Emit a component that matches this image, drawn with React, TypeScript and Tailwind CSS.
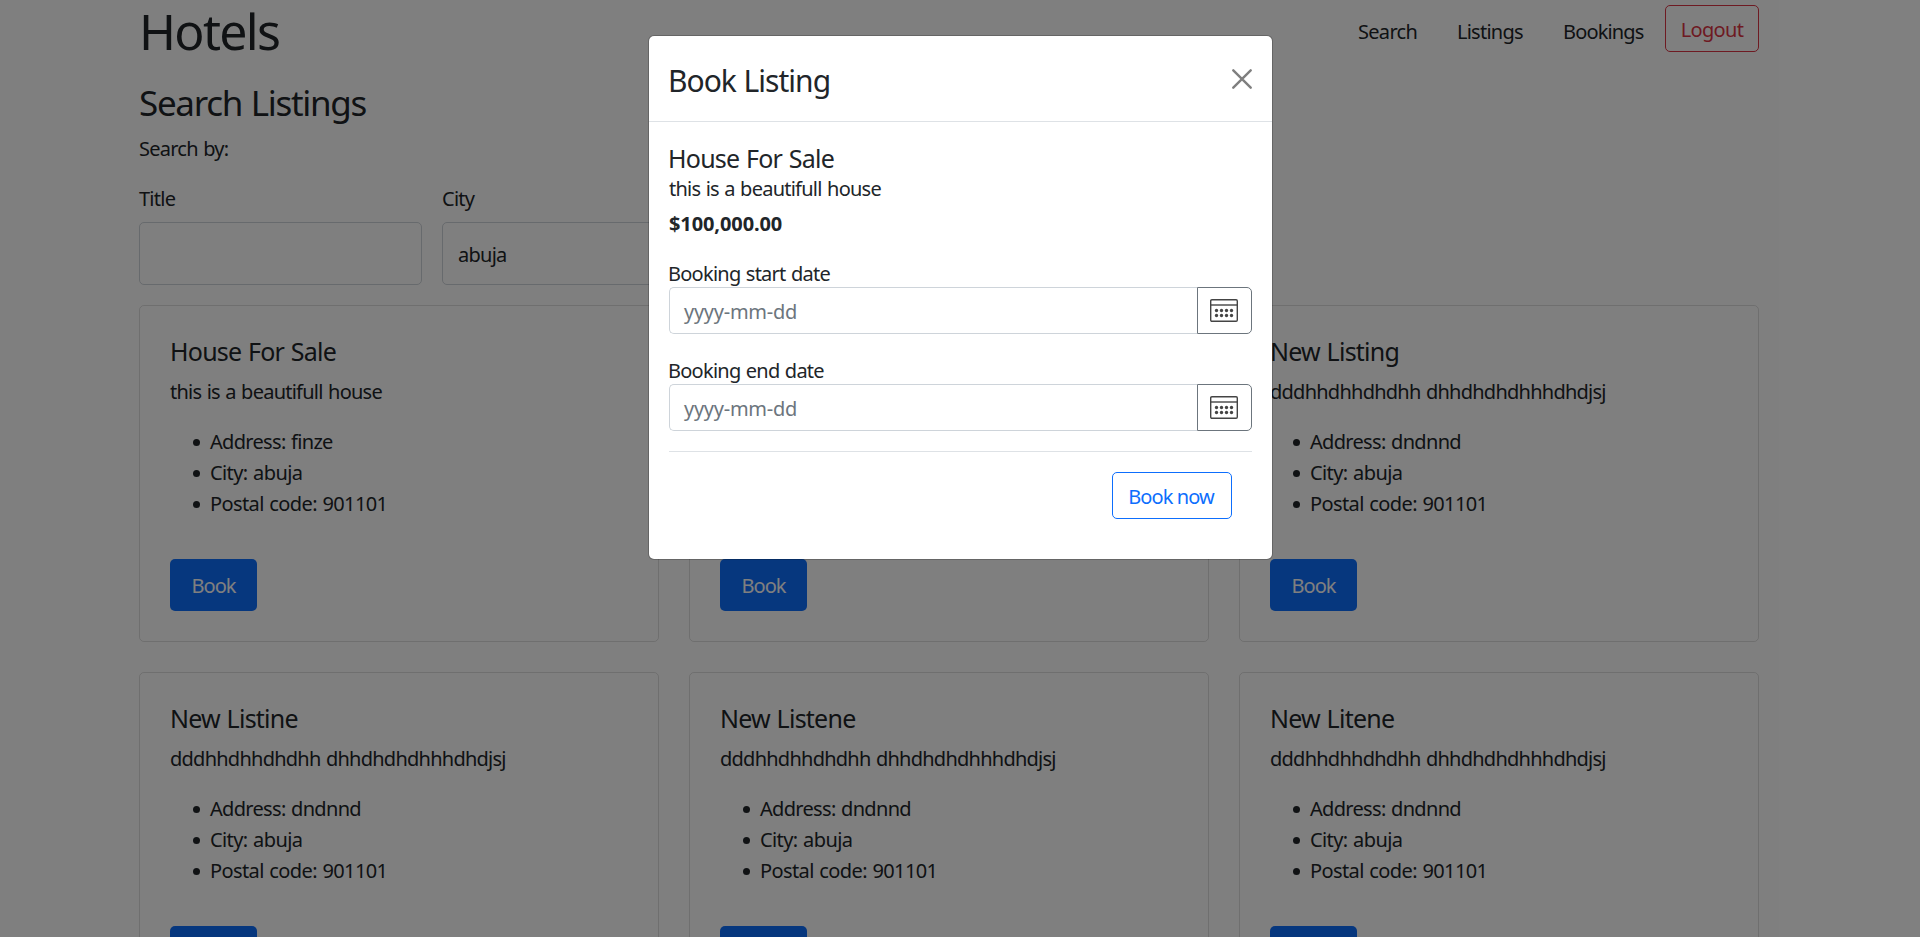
import type { ReactNode } from 'react';

type Listing = { title: string; description: string; address: string };

const gibberish = 'dddhhdhhdhdhh dhhdhdhdhhhdhdjsj';

const listings: Listing[] = [
  { title: 'House For Sale', description: 'this is a beautifull house', address: 'finze' },
  { title: 'New Listing', description: gibberish, address: 'dndnnd' },
  { title: 'New Listing', description: gibberish, address: 'dndnnd' },
  { title: 'New Listine', description: gibberish, address: 'dndnnd' },
  { title: 'New Listene', description: gibberish, address: 'dndnnd' },
  { title: 'New Litene', description: gibberish, address: 'dndnnd' },
];

function ListItem({ children }: { children: ReactNode }) {
  return (
    <li className="relative h-[31px] leading-[31px] tracking-[-0.6px]">
      <span className="absolute top-[13px] -left-[17px] size-[7px] rounded-full bg-[#212529]" />
      {children}
    </li>
  );
}

function ListingCard({ title, description, address }: Listing) {
  return (
    <article className="h-[337px] rounded-[5px] border border-black/[0.125] p-[30px]">
      <h5 className="text-[25px] leading-[30px] tracking-[-0.76px]">{title}</h5>
      <p className="mt-2.5 h-[30px] leading-[32px]">{description}</p>
      <ul className="mt-5 pl-10">
        <ListItem>
          <span className="tracking-[-0.68px]">Address: {address}</span>
        </ListItem>
        <ListItem>City: abuja</ListItem>
        <ListItem>Postal code: 901101</ListItem>
      </ul>
      <button className="mt-10 block h-[52px] w-[87px] rounded-[5px] bg-[#0d6efd] pt-[2px] tracking-[-0.95px] text-white">
        Book
      </button>
    </article>
  );
}

function Navbar() {
  return (
    <header className="flex h-[62px] items-start justify-between">
      <h1 className="pt-px text-[50px] leading-[60px] tracking-[-1.68px]">Hotels</h1>
      <nav className="flex items-start">
        <a className="mt-[17px] w-[99px] leading-[30px] tracking-[-0.7px]">Search</a>
        <a className="mt-[17px] w-[106px] leading-[30px] tracking-[-0.76px]">Listings</a>
        <a className="mt-[17px] w-[102px] leading-[30px] tracking-[-0.85px]">Bookings</a>
        <button className="mt-[5px] h-[47px] w-[94px] rounded-[5px] border border-[#dc3545] pt-[2px] tracking-[-0.7px] text-[#dc3545]">
          Logout
        </button>
      </nav>
    </header>
  );
}

function SearchField({ label, value }: { label: string; value: string }) {
  return (
    <label className="block w-[283px]">
      <span className="block h-[30px] leading-[32px]">{label}</span>
      <span className="mt-[9px] flex h-[63px] items-center rounded-[5px] border border-[#ced4da] pt-[2px] pl-[15px] leading-[30px]">
        {value}
      </span>
    </label>
  );
}

function CalendarIcon() {
  return (
    <svg className="mr-px" width="28" height="23" viewBox="0 0 28 23" fill="none" stroke="#444" strokeWidth="1.4">
      <rect x="0.7" y="0.7" width="26.6" height="21.6" rx="1.2" />
      <path d="M0.7 6H27.3" />
      <g fill="#444" stroke="none">
        <circle cx="6.5" cy="11.5" r="1.65" />
        <circle cx="11.5" cy="11.5" r="1.65" />
        <circle cx="16.5" cy="11.5" r="1.65" />
        <circle cx="21.5" cy="11.5" r="1.65" />
        <circle cx="6.5" cy="16.5" r="1.65" />
        <circle cx="11.5" cy="16.5" r="1.65" />
        <circle cx="16.5" cy="16.5" r="1.65" />
        <circle cx="21.5" cy="16.5" r="1.65" />
      </g>
    </svg>
  );
}

function DateField({ label }: { label: string }) {
  return (
    <div>
      <div className="-ml-px h-[29px] leading-[32px]">{label}</div>
      <div className="flex h-[47px]">
        <div className="flex flex-1 items-center rounded-l-[5px] border border-r-0 border-[#ced4da] pt-[2px] pl-[14px] tracking-[-0.27px] text-[#6c757d]">
          <span className="leading-[30px]">yyyy-mm-dd</span>
        </div>
        <button className="flex w-[55px] items-center justify-center rounded-r-[5px] border border-[#6c757d]">
          <CalendarIcon />
        </button>
      </div>
    </div>
  );
}

function BookingDialog() {
  return (
    <section className="h-[525px] w-[625px] rounded-[6px] border border-black/20 bg-white bg-clip-padding">
      <header className="flex h-[86px] items-center justify-between border-b border-[#dee2e6] px-5">
        <h4 className="-ml-px pt-[3px] text-[30px] leading-[45px] tracking-[-0.98px]">Book Listing</h4>
        <svg className="mt-px" width="20" height="20" viewBox="0 0 20 20" stroke="#7f7f7f" strokeWidth="2.4" strokeLinecap="round">
          <path d="M1.3 1.3L18.7 18.7M18.7 1.3L1.3 18.7" />
        </svg>
      </header>
      <div className="px-5 pt-5">
        <h5 className="-ml-px h-[31px] text-[25px] leading-[33px] tracking-[-0.76px]">House For Sale</h5>
        <p className="h-[30px] leading-[32px]">this is a beautifull house</p>
        <p className="mt-[5px] mb-5 h-[30px] leading-[32px] font-bold tracking-[-0.1px]">$100,000.00</p>
        <DateField label="Booking start date" />
        <div className="h-[21px]" />
        <DateField label="Booking end date" />
        <div className="mt-5 flex justify-end border-t border-[#dee2e6] pt-5 pr-5">
          <button className="h-[47px] w-[120px] rounded-[5px] border border-[#0d6efd] pt-[2px] pr-[2px] tracking-[-0.9px] text-[#0d6efd]">
            Book now
          </button>
        </div>
      </div>
    </section>
  );
}

export default function App() {
  return (
    <div className="relative h-[937px] overflow-hidden bg-white font-['Noto_Sans',sans-serif] text-[20px] tracking-[-0.75px] text-[#212529] [word-spacing:0.9px]">
      <main className="ml-[139px] w-[1620px]">
        <Navbar />
        <h3 className="mt-[19px] h-[42px] text-[35px] leading-[44px] tracking-[-1.3px]">Search Listings</h3>
        <p className="mt-2.5 h-[30px] leading-[32px]">Search by:</p>
        <div className="mt-5 flex gap-5">
          <SearchField label="Title" value="" />
          <SearchField label="City" value="abuja" />
        </div>
        <div className="mt-5 grid grid-cols-3 gap-[30px]">
          {listings.map((listing, index) => (
            <ListingCard key={index} {...listing} />
          ))}
        </div>
      </main>
      <div className="absolute inset-0 bg-black/50" />
      <div className="absolute inset-0 flex items-start justify-center pt-[35px] pl-px">
        <BookingDialog />
      </div>
    </div>
  );
}
